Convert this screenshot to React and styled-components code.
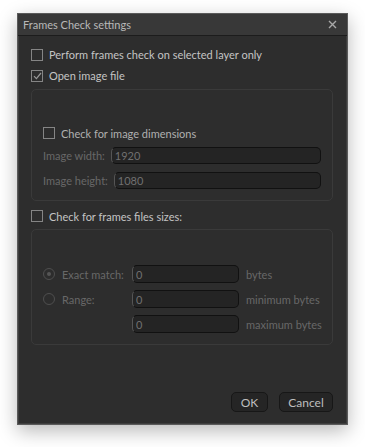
import React, { useState } from 'react';
import styled, { createGlobalStyle } from 'styled-components';

const GlobalStyle = createGlobalStyle`
  html, body {
    margin: 0;
    padding: 0;
    background: #ffffff;
  }
  body {
    font-family: Lato, "Open Sans", sans-serif;
  }
`;

const Page = styled.div`
  padding: 13px 17px 0 17px;
  width: 365px;
  height: 447px;
  box-sizing: border-box;
`;

const Window = styled.div`
  width: 331px;
  height: 412px;
  box-sizing: border-box;
  border: 1px solid #5a5a5a;
  box-shadow: inset 0 0 0 1px #3d3d3d, 0 6px 18px rgba(0, 0, 0, 0.28);
  background: #2d2d2d;
  display: flex;
  flex-direction: column;
`;

const TitleBar = styled.div`
  height: 21px;
  display: flex;
  align-items: center;
  justify-content: space-between;
  padding: 0 10px 0 5px;
  background: #383838;
  border-bottom: 1px solid #1c1c1c;
  color: #b8b8b8;
  font-size: 11px;
`;

const CloseButton = styled.button`
  border: none;
  background: none;
  padding: 0;
  width: 10px;
  height: 10px;
  display: flex;
  align-items: center;
  justify-content: center;
  cursor: pointer;
`;

const Body = styled.div`
  flex: 1;
  display: flex;
  flex-direction: column;
  padding: 8px 14px 12px 13px;
`;

const CheckRow = styled.label`
  display: flex;
  align-items: center;
  gap: 6px;
  height: ${({ h }) => h || 21}px;
  color: ${({ dim }) => (dim ? '#b0b0b0' : '#c4c4c4')};
  font-size: 11px;
  cursor: pointer;
`;

const Box = styled.span`
  width: 10px;
  height: 10px;
  border: 1.5px solid #858585;
  display: flex;
  align-items: center;
  justify-content: center;
  flex-shrink: 0;
`;

const Group = styled.div`
  border: 1px solid #3a3a3a;
  border-radius: 5px;
  padding: ${({ top }) => top}px 11px 11px 11px;
  margin: 3px 0 ${({ bottom }) => bottom || 0}px 0;
  display: flex;
  flex-direction: column;
`;

const FieldRow = styled.div`
  display: flex;
  align-items: center;
  gap: 6px;
  margin-top: ${({ mt }) => mt}px;
`;

const DimLabel = styled.span`
  color: #686868;
  font-size: 11px;
  white-space: nowrap;
`;

const Input = styled.input`
  box-sizing: border-box;
  height: ${({ h }) => h || 17}px;
  width: ${({ w }) => (w ? `${w}px` : 'auto')};
  flex: ${({ w }) => (w ? 'none' : 1)};
  min-width: 0;
  background: #242424;
  border: 1px solid #111111;
  border-left-color: #555555;
  border-radius: 5px;
  color: #707070;
  font-family: Lato, "Open Sans", sans-serif;
  font-size: 11px;
  padding: 0 3px;
  outline: none;
`;

const SizeGrid = styled.div`
  display: grid;
  grid-template-columns: 19px 70px 107px auto;
  grid-auto-rows: 18px;
  row-gap: 7px;
  align-items: center;
`;

const Radio = styled.span`
  width: 10px;
  height: 10px;
  border-radius: 50%;
  border: 1.5px solid #4f4f4f;
  display: flex;
  align-items: center;
  justify-content: center;
  &::after {
    content: '';
    width: 4px;
    height: 4px;
    border-radius: 50%;
    background: ${({ on }) => (on ? '#555555' : 'transparent')};
  }
`;

const Suffix = styled(DimLabel)`
  margin-left: 7px;
`;

const Footer = styled.div`
  margin-top: auto;
  display: flex;
  justify-content: flex-end;
  gap: 11px;
`;

const Button = styled.button`
  height: 20px;
  min-width: ${({ w }) => w}px;
  box-sizing: border-box;
  background: #252525;
  border: 1px solid #171717;
  border-radius: 5px;
  color: #bebebe;
  font-family: Lato, "Open Sans", sans-serif;
  font-size: 12px;
  padding: 0 8px;
  cursor: pointer;
`;

const Check = ({ checked }) => (
  <Box>
    {checked && (
      <svg width="9" height="8" viewBox="0 0 9 8">
        <path d="M1 4.2 L3.4 6.6 L8 1" fill="none" stroke="#9a9a9a" strokeWidth="1.2" />
      </svg>
    )}
  </Box>
);

const App = () => {
  const [layerOnly, setLayerOnly] = useState(false);
  const [openImage, setOpenImage] = useState(true);
  const [dims, setDims] = useState(false);
  const [sizes, setSizes] = useState(false);

  return (
    <Page>
      <GlobalStyle />
      <Window>
        <TitleBar>
          <span>Frames Check settings</span>
          <CloseButton>
            <svg width="9" height="9" viewBox="0 0 9 9">
              <path d="M1 1 L8 8 M8 1 L1 8" stroke="#a8a8a8" strokeWidth="1.4" />
            </svg>
          </CloseButton>
        </TitleBar>
        <Body>
          <CheckRow onClick={() => setLayerOnly(!layerOnly)}>
            <Check checked={layerOnly} />
            Perform frames check on selected layer only
          </CheckRow>
          <CheckRow onClick={() => setOpenImage(!openImage)}>
            <Check checked={openImage} />
            Open image file
          </CheckRow>
          <Group top={34} bottom={5}>
            <CheckRow h={18} dim onClick={() => setDims(!dims)}>
              <Check checked={dims} />
              Check for image dimensions
            </CheckRow>
            <FieldRow mt={5}>
              <DimLabel>Image width:</DimLabel>
              <Input defaultValue="1920" disabled />
            </FieldRow>
            <FieldRow mt={8}>
              <DimLabel>Image height:</DimLabel>
              <Input defaultValue="1080" disabled />
            </FieldRow>
          </Group>
          <CheckRow h={20} onClick={() => setSizes(!sizes)}>
            <Check checked={sizes} />
            Check for frames files sizes:
          </CheckRow>
          <Group top={35}>
            <SizeGrid>
              <Radio on />
              <DimLabel>Exact match:</DimLabel>
              <Input w={107} h={18} defaultValue="0" disabled />
              <Suffix>bytes</Suffix>
              <Radio />
              <DimLabel>Range:</DimLabel>
              <Input w={107} h={18} defaultValue="0" disabled />
              <Suffix>minimum bytes</Suffix>
              <span />
              <span />
              <Input w={107} h={18} defaultValue="0" disabled />
              <Suffix>maximum bytes</Suffix>
            </SizeGrid>
          </Group>
          <Footer>
            <Button w={37}>OK</Button>
            <Button w={54}>Cancel</Button>
          </Footer>
        </Body>
      </Window>
    </Page>
  );
};

export default App;
